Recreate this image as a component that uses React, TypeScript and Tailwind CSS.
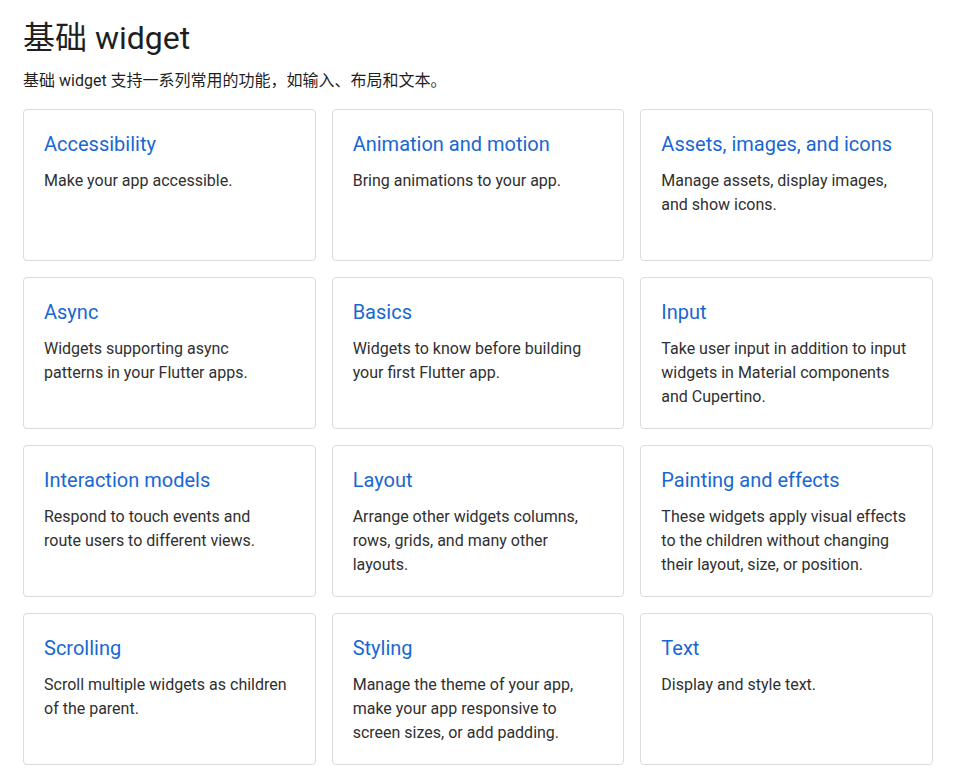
import React from "react";

const cards: { title: string; desc: string }[] = [
  { title: "Accessibility", desc: "Make your app accessible." },
  { title: "Animation and motion", desc: "Bring animations to your app." },
  { title: "Assets, images, and icons", desc: "Manage assets, display images, and show icons." },
  { title: "Async", desc: "Widgets supporting async patterns in your Flutter apps." },
  { title: "Basics", desc: "Widgets to know before building your first Flutter app." },
  { title: "Input", desc: "Take user input in addition to input widgets in Material components and Cupertino." },
  { title: "Interaction models", desc: "Respond to touch events and route users to different views." },
  { title: "Layout", desc: "Arrange other widgets columns, rows, grids, and many other layouts." },
  { title: "Painting and effects", desc: "These widgets apply visual effects to the children without changing their layout, size, or position." },
  { title: "Scrolling", desc: "Scroll multiple widgets as children of the parent." },
  { title: "Styling", desc: "Manage the theme of your app, make your app responsive to screen sizes, or add padding." },
  { title: "Text", desc: "Display and style text." },
];

export default function App() {
  return (
    <div
      className="min-h-screen bg-white text-[#1f1f1f] pl-[23px] pr-[27px] pt-[16px]"
      style={{ fontFamily: '"Roboto", "Noto Sans CJK SC", sans-serif' }}
    >
      <h1 className="text-[32px] leading-[44px] font-normal text-[#1f1f1f]">基础 widget</h1>
      <p className="mt-[10px] text-[16px] leading-[22px] text-[#1f1f1f]">
        基础 widget 支持一系列常用的功能，如输入、布局和文本。
      </p>
      <div className="mt-[17px] grid grid-cols-3 gap-[16px]">
        {cards.map((c) => (
          <div
            key={c.title}
            className="h-[152px] rounded-[4px] border border-[#dadce0] bg-white px-[20px] pt-[21px]"
          >
            <div className="text-[20px] leading-[26px] text-[#1967d2]">{c.title}</div>
            <div className="mt-[12px] max-w-[246px] text-[16px] leading-[24px] text-[#303030]">{c.desc}</div>
          </div>
        ))}
      </div>
    </div>
  );
}
